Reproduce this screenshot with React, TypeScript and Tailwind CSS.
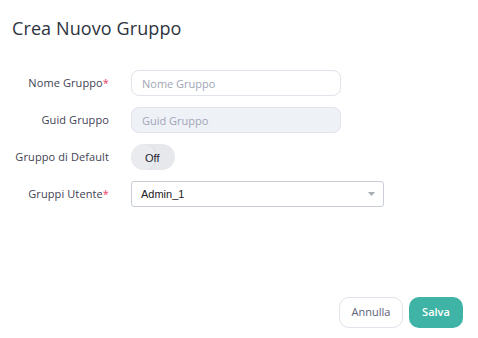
const font = { fontFamily: '"Open Sans", "Noto Sans", sans-serif' };

function Label({ text, required }: { text: string; required?: boolean }) {
    return (
        <div className="w-[109px] shrink-0 text-right text-[11px] tracking-[0.1px] text-[#3f4254]">
            {text}
            {required && <span className="text-[#f1416c]">*</span>}
        </div>
    );
}

export default function App() {
    return (
        <div className="h-[338px] w-[478px] bg-white flex flex-col" style={font}>
            <h1 className="pl-3 pt-[16px] text-[18px] font-medium tracking-[0.1px] text-[#2d3340] leading-6">Crea Nuovo Gruppo</h1>

            <div className="mt-[30px] flex flex-col gap-[11px]">
                <div className="flex items-center gap-[22px]">
                    <Label text="Nome Gruppo" required />
                    <input
                        placeholder="Nome Gruppo"
                        className="h-[26px] w-[210px] rounded-lg border border-[#dfe3ea] bg-white px-[10px] text-[11px] text-[#3f4254] placeholder:text-[#a1a5b7] outline-none"
                    />
                </div>
                <div className="flex items-center gap-[22px]">
                    <Label text="Guid Gruppo" />
                    <input
                        disabled
                        placeholder="Guid Gruppo"
                        className="h-[26px] w-[210px] rounded-lg border border-[#dfe3ea] bg-[#eef1f6] px-[10px] text-[11px] placeholder:text-[#a1a5b7] outline-none"
                    />
                </div>
                <div className="flex items-center gap-[22px]">
                    <Label text="Gruppo di Default" />
                    <div className="relative h-[26px] w-[44px] rounded-full bg-[#e6e8eb]">
                        <div className="absolute left-0 top-0 h-[26px] w-[26px] rounded-full border-r border-[#d6d9de] bg-[#e9ebee]" />
                        <span className="absolute left-[14px] top-[6px] text-[11px] text-[#1f2430]" style={{ fontFamily: '"Liberation Sans", Arial, sans-serif' }}>
                            Off
                        </span>
                    </div>
                </div>
                <div className="flex items-center gap-[22px]">
                    <Label text="Gruppi Utente" required />
                    <div
                        className="flex h-[26px] w-[253px] items-center justify-between rounded-[3px] border border-[#c9ced6] bg-white pl-[9px] pr-[8px] text-[11px] text-[#222]"
                        style={{ fontFamily: '"Liberation Sans", Arial, sans-serif' }}
                    >
                        <span>Admin_1</span>
                        <svg width="7" height="4" viewBox="0 0 7 4">
                            <path d="M0 0 L7 0 L3.5 4 Z" fill="#a8adb4" />
                        </svg>
                    </div>
                </div>
            </div>

            <div className="mt-auto mb-[10px] mr-[15px] flex justify-end gap-[6px]">
                <button className="h-[31px] w-[64px] rounded-[10px] border border-[#dfe3ea] bg-white text-[11px] text-[#5e6278]">Annulla</button>
                <button className="h-[31px] w-[54px] rounded-[10px] bg-[#3fb4a6] text-[11px] font-semibold text-white">Salva</button>
            </div>
        </div>
    );
}
